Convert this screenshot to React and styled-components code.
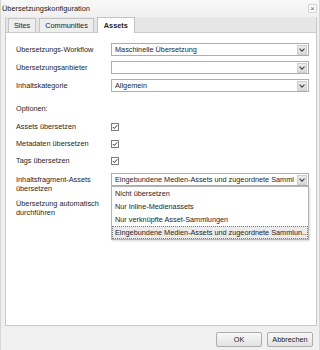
import React from "react";
import styled, { createGlobalStyle } from "styled-components";

const Global = createGlobalStyle`
  html, body { margin: 0; padding: 0; }
  body {
    width: 320px; height: 350px; overflow: hidden;
    background: #f0f0f0;
    font-family: "Liberation Sans", Arial, sans-serif;
    font-size: 7.3px;
    color: #1e1e1e;
  }
  * { box-sizing: border-box; }
`;

const Window = styled.div`
  width: 320px; height: 350px;
  display: flex; flex-direction: column;
  border-left: 1px solid #d6d6d6;
  border-right: 1px solid #d6d6d6;
  background: #f0f0f0;
`;

const TitleBar = styled.div`
  height: 17px;
  display: flex; align-items: center; justify-content: space-between;
  padding: 0 2px 0 1px;
  background: linear-gradient(#f8f8f8, #f0f0f0);
  font-size: 7.4px;
  color: #222;
`;

const CloseBtn = styled.div`
  width: 9px; height: 9px;
  border: 1px solid #d2d2d2;
  border-radius: 1px;
  background: #fbfbfb;
  display: flex; align-items: center; justify-content: center;
  color: #555;
`;

const TabFrame = styled.div`
  flex: 1;
  margin: 0 2px 0 4px;
  display: flex; flex-direction: column;
  border: 1px solid #c9c9c9;
  border-top: none;
`;

const TabStrip = styled.div`
  height: 16px;
  display: flex; align-items: flex-end; gap: 3px;
  padding-left: 2px;
  background: #e6e6e6;
  border-bottom: 1px solid #c9c9c9;
`;

const Tab = styled.div`
  height: ${(p) => (p.$active ? "16px" : "14px")};
  padding: 0 ${(p) => (p.$active ? "6px" : "5px")};
  display: flex; align-items: center;
  border: 1px solid #c3c3c3;
  border-bottom: none;
  margin-bottom: ${(p) => (p.$active ? "-1px" : "0")};
  background: ${(p) => (p.$active ? "#ffffff" : "#eeeeee")};
  font-weight: ${(p) => (p.$active ? "bold" : "normal")};
  color: #222;
`;

const Panel = styled.div`
  flex: 1;
  background: #ffffff;
  padding: 10px 7px 0 10px;
`;

const Row = styled.div`
  display: grid;
  grid-template-columns: 95px minmax(0, 1fr);
  align-items: ${(p) => p.$align || "center"};
  margin-top: ${(p) => p.$gap || 0}px;
`;

const Label = styled.div`
  line-height: 9px;
  padding-top: ${(p) => p.$pt || 0}px;
`;

const SelectWrap = styled.div`
  position: relative;
  min-width: 0;
`;

const SelectBox = styled.div`
  height: 13px;
  border: 1px solid #aeaeae;
  background: #fff;
  display: flex; align-items: center;
  padding-left: 3px;
`;

const SelectText = styled.div`
  flex: 1;
  min-width: 0;
  white-space: nowrap;
  overflow: hidden;
`;

const Arrow = styled.div`
  flex: none;
  width: 10px; height: 10px;
  margin: 0 1px 0 1px;
  background: linear-gradient(#ececec, #dadada);
  border: 1px solid #d0d0d0;
  display: flex; align-items: center; justify-content: center;
`;

const List = styled.div`
  position: absolute;
  top: 100%; left: 0; right: 0;
  background: #fff;
  border: 1px solid #b4b4b4;
  box-shadow: 1px 1px 2px rgba(0, 0, 0, 0.15);
  z-index: 2;
`;

const Item = styled.div`
  height: 13px;
  display: flex; align-items: center;
  padding-left: 2px;
  white-space: nowrap;
  overflow: hidden;
  border: 1px ${(p) => (p.$sel ? "dotted #7a7a7a" : "solid transparent")};
  background: ${(p) => (p.$sel ? "#ebebeb" : "transparent")};
`;

const Footer = styled.div`
  height: 24px;
  display: flex; justify-content: flex-end; align-items: flex-start;
  gap: 5px;
  padding: 6px 6px 0 0;
`;

const Button = styled.div`
  width: 46px; height: 15px;
  border: 1px solid #adadad;
  border-radius: 2px;
  background: linear-gradient(#f8f8f8, #e2e2e2);
  display: flex; align-items: center; justify-content: center;
  color: #222;
`;

const Check = () => (
  <svg width="8" height="8" viewBox="0 0 8 8" style={{ display: "block" }}>
    <rect x="0.5" y="0.5" width="7" height="7" fill="#fff" stroke="#7d7d7d" />
    <path d="M1.8 4 L3.3 5.5 L6.2 2.3" fill="none" stroke="#333" strokeWidth="1" />
  </svg>
);

const Chevron = () => (
  <svg width="6" height="4" viewBox="0 0 6 4" style={{ display: "block" }}>
    <path d="M0.5 0.7 L3 3.2 L5.5 0.7" fill="none" stroke="#444" strokeWidth="1.1" />
  </svg>
);

const Select = ({ value, children }) => (
  <SelectWrap>
    <SelectBox>
      <SelectText>{value}</SelectText>
      <Arrow><Chevron /></Arrow>
    </SelectBox>
    {children}
  </SelectWrap>
);

export default function App() {
  return (
    <>
      <Global />
      <Window>
        <TitleBar>
          <span>Übersetzungskonfiguration</span>
          <CloseBtn>×</CloseBtn>
        </TitleBar>
        <TabFrame>
          <TabStrip>
            <Tab>Sites</Tab>
            <Tab>Communities</Tab>
            <Tab $active>Assets</Tab>
          </TabStrip>
          <Panel>
            <Row>
              <Label>Übersetzungs-Workflow</Label>
              <Select value="Maschinelle Übersetzung" />
            </Row>
            <Row $gap={5}>
              <Label>Übersetzungsanbieter</Label>
              <Select value="" />
            </Row>
            <Row $gap={5}>
              <Label>Inhaltskategorie</Label>
              <Select value="Allgemein" />
            </Row>
            <Row $gap={12}>
              <Label>Optionen:</Label>
            </Row>
            <Row $gap={9}>
              <Label>Assets übersetzen</Label>
              <Check />
            </Row>
            <Row $gap={8}>
              <Label>Metadaten übersetzen</Label>
              <Check />
            </Row>
            <Row $gap={8}>
              <Label>Tags übersetzen</Label>
              <Check />
            </Row>
            <Row $gap={8} $align="start">
              <Label $pt={2}>Inhaltsfragment-Assets<br />übersetzen</Label>
              <Select value="Eingebundene Medien-Assets und zugeordnete Samml">
                <List>
                  <Item>Nicht übersetzen</Item>
                  <Item>Nur Inline-Medienassets</Item>
                  <Item>Nur verknüpfte Asset-Sammlungen</Item>
                  <Item $sel>Eingebundene Medien-Assets und zugeordnete Sammlun...</Item>
                </List>
              </Select>
            </Row>
            <Row $gap={6} $align="start">
              <Label>Übersetzung automatisch<br />durchführen</Label>
              <Check />
            </Row>
          </Panel>
        </TabFrame>
        <Footer>
          <Button>OK</Button>
          <Button>Abbrechen</Button>
        </Footer>
      </Window>
    </>
  );
}
